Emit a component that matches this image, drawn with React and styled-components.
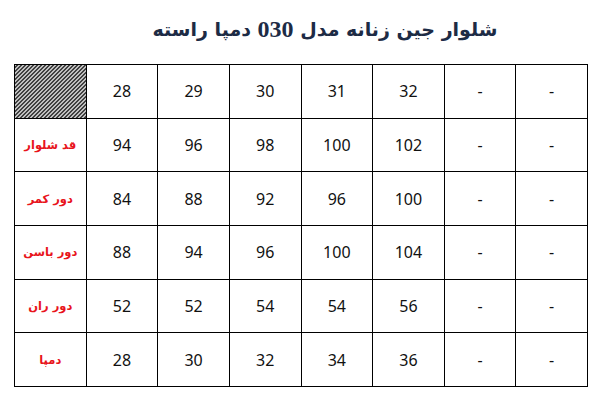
import React from 'react';
import styled, { createGlobalStyle } from 'styled-components';

const GlobalStyle = createGlobalStyle`
  html, body {
    margin: 0;
    padding: 0;
    background: #fff;
  }
`;

const rows = [
  { label: null, values: ['28', '29', '30', '31', '32', '-', '-'] },
  { label: 'قد شلوار', values: ['94', '96', '98', '100', '102', '-', '-'] },
  { label: 'دور کمر', values: ['84', '88', '92', '96', '100', '-', '-'] },
  { label: 'دور باسن', values: ['88', '94', '96', '100', '104', '-', '-'] },
  { label: 'دور ران', values: ['52', '52', '54', '54', '56', '-', '-'] },
  { label: 'دمپا', values: ['28', '30', '32', '34', '36', '-', '-'] },
];

const App = () => {
  return (
    <Page>
      <GlobalStyle />
      <Title dir="rtl">
        شلوار جین زنانه مدل <Num>030</Num> دمپا راسته
      </Title>
      <SizeTable>
        <tbody>
          {rows.map((row, i) => (
            <Row key={i}>
              {row.label ? (
                <LabelCell dir="rtl">{row.label}</LabelCell>
              ) : (
                <HatchCell />
              )}
              {row.values.map((v, j) => (
                <Cell key={j}>{v}</Cell>
              ))}
            </Row>
          ))}
        </tbody>
      </SizeTable>
    </Page>
  );
};

// styled components
const Page = styled.div`
  width: 606px;
  height: 404px;
  background: #fff;
  overflow: hidden;
`;

const Title = styled.h1`
  margin: 0;
  height: 64px;
  padding-left: 44px;
  box-sizing: border-box;
  display: flex;
  align-items: center;
  justify-content: center;
  padding-bottom: 6px;
  color: #1d2b45;
  font-family: "DejaVu Sans", sans-serif;
  font-weight: bold;
  font-size: 19px;
  white-space: pre;
`;

const Num = styled.span`
  font-family: "Liberation Serif", serif;
  font-size: 24px;
`;

const SizeTable = styled.table`
  margin-left: 14px;
  width: 574px;
  border-collapse: collapse;
  table-layout: fixed;
`;

const Row = styled.tr`
  height: 53.7px;
`;

const Cell = styled.td`
  border: 1.5px solid #000;
  padding: 0;
  text-align: center;
  vertical-align: middle;
  font-family: "Noto Sans", "Open Sans", sans-serif;
  font-size: 16px;
  color: #111;
`;

const LabelCell = styled(Cell)`
  font-family: "DejaVu Sans", sans-serif;
  font-weight: bold;
  font-size: 11.5px;
  color: #e8141c;
`;

const HatchCell = styled(Cell)`
  background-color: #fff;
  background-image: linear-gradient(
    135deg,
    #000 0%,
    #000 32%,
    #fff 32%,
    #fff 50%,
    #000 50%,
    #000 82%,
    #fff 82%,
    #fff 100%
  );
  background-size: 4px 4px;
`;

export default App;
